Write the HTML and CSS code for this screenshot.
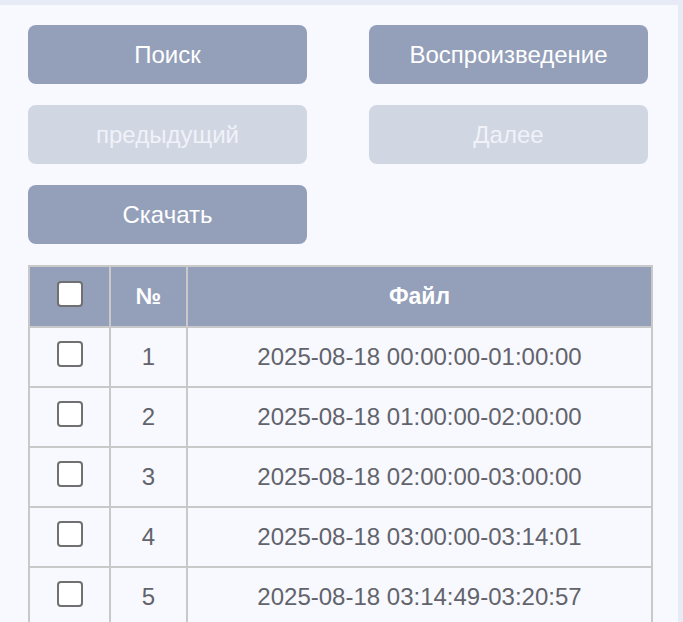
FILE: index.html
```html
<!DOCTYPE html>
<html lang="ru">
<head>
<meta charset="utf-8">
<link rel="stylesheet" href="styles.css">
</head>
<body>
<div class="outer">
  <div class="panel">
    <div class="buttons">
      <button class="btn">Поиск</button>
      <button class="btn">Воспроизведение</button>
      <button class="btn disabled">предыдущий</button>
      <button class="btn disabled">Далее</button>
      <button class="btn">Скачать</button>
    </div>
    <table class="files">
      <colgroup>
        <col class="c-check">
        <col class="c-num">
        <col class="c-file">
      </colgroup>
      <thead>
        <tr><th><span class="cb"></span></th><th>№</th><th>Файл</th></tr>
      </thead>
      <tbody>
        <tr><td><span class="cb"></span></td><td>1</td><td>2025-08-18 00:00:00-01:00:00</td></tr>
        <tr><td><span class="cb"></span></td><td>2</td><td>2025-08-18 01:00:00-02:00:00</td></tr>
        <tr><td><span class="cb"></span></td><td>3</td><td>2025-08-18 02:00:00-03:00:00</td></tr>
        <tr><td><span class="cb"></span></td><td>4</td><td>2025-08-18 03:00:00-03:14:01</td></tr>
        <tr><td><span class="cb"></span></td><td>5</td><td>2025-08-18 03:14:49-03:20:57</td></tr>
      </tbody>
    </table>
  </div>
</div>
</body>
</html>
```
FILE: styles.css
```css
html, body {
  margin: 0;
  padding: 0;
  background: #e6ebf5;
  font-family: "Liberation Sans", Arial, sans-serif;
}
.outer {
  padding: 5px 5px 0 0;
  height: 622px;
  box-sizing: border-box;
  overflow: hidden;
}
.panel {
  background: #f8f9ff;
  height: 100%;
  padding: 20px 0 0 28px;
  box-sizing: border-box;
}
.buttons {
  display: grid;
  grid-template-columns: 279px 279px;
  column-gap: 62px;
  row-gap: 21px;
}
.btn {
  height: 59px;
  border: none;
  border-radius: 8px;
  background: #949fba;
  color: #ffffff;
  font-family: "Liberation Sans", Arial, sans-serif;
  font-size: 24px;
  padding: 0;
}
.btn.disabled {
  background: #d1d6e3;
  color: #f0f2f8;
}
.files {
  margin-top: 21px;
  border-collapse: collapse;
  width: 623px;
  table-layout: fixed;
  border: 2px solid #c9c9c9;
}
.c-check { width: 81px; }
.c-num { width: 77px; }
.c-file { width: 465px; }
.files th, .files td {
  border: 2px solid #c9c9c9;
  text-align: center;
  padding: 0;
  font-size: 24px;
}
.files th {
  background: #949fba;
  color: #ffffff;
  font-weight: bold;
  font-size: 23px;
  height: 59px;
}
.files td {
  color: #62636b;
  height: 58px;
}
.cb {
  display: block;
  width: 22px;
  height: 22px;
  margin: -6px auto 0;
  border: 2px solid #707070;
  border-radius: 4px;
  background: #ffffff;
}
```
